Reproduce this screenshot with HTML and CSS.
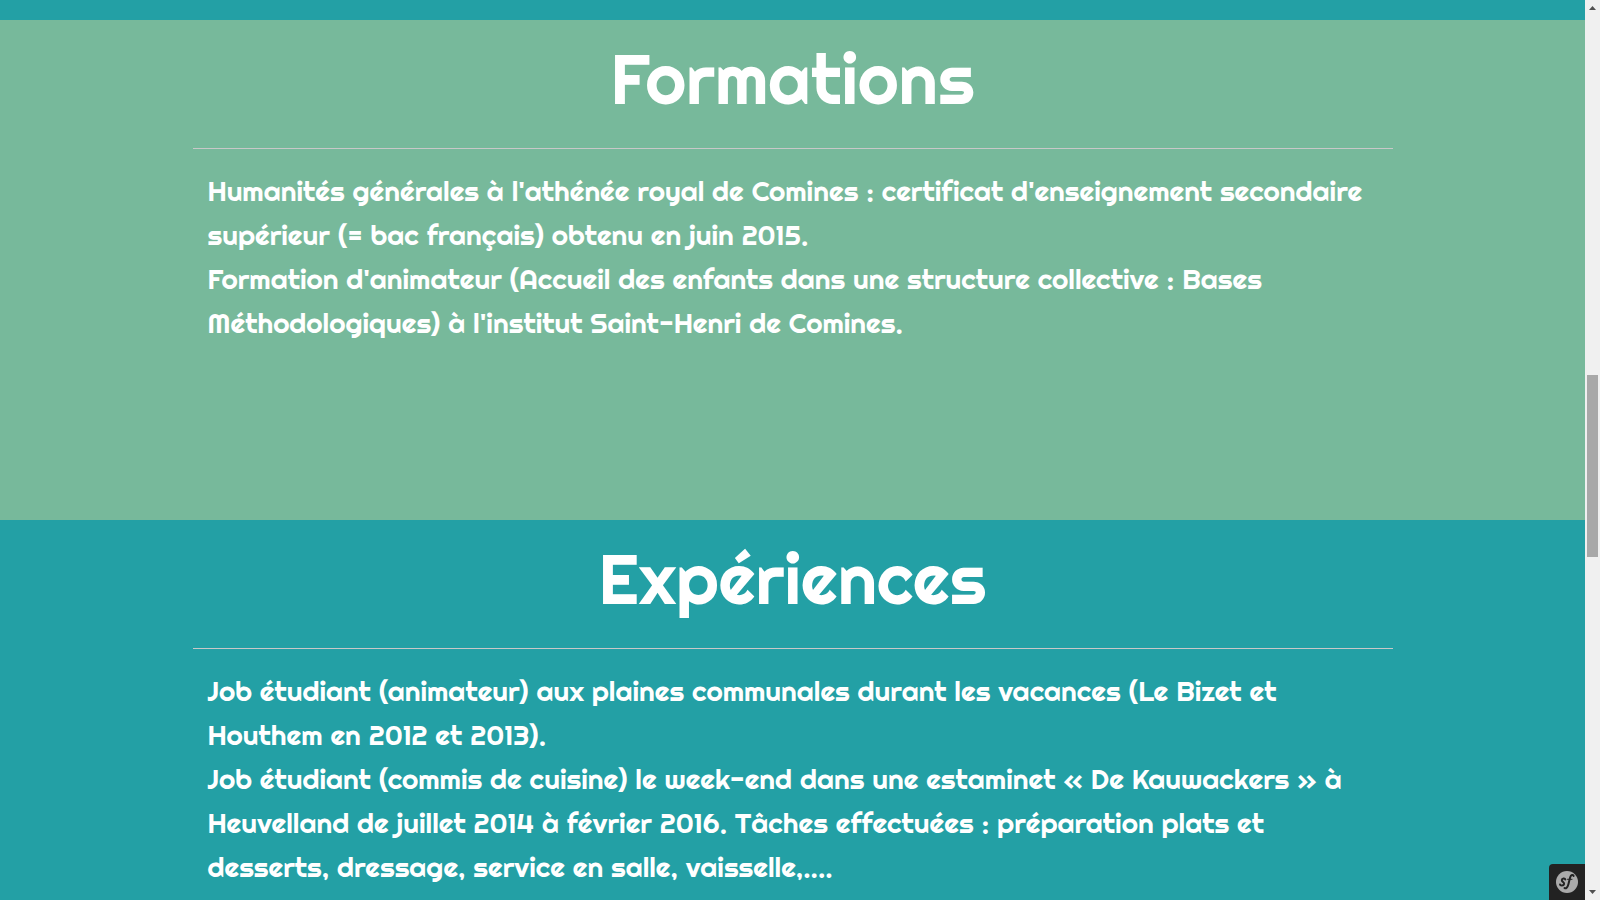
FILE: index.html
```html
<!DOCTYPE html>
<html lang="fr">
<head>
<meta charset="utf-8">
<title>Curriculum vitae</title>
<link rel="stylesheet" href="styles.css">
</head>
<body>
<main class="page">
  <div class="previous"></div>
  <section class="section section-green">
    <div class="container">
      <h1 class="title">Formations</h1>
      <hr class="rule">
      <p class="text">Humanités générales à l'athénée royal de Comines : certificat d'enseignement secondaire supérieur (= bac français) obtenu en juin 2015.<br>Formation d'animateur (Accueil des enfants dans une structure collective : Bases Méthodologiques) à l'institut Saint-Henri de Comines.</p>
    </div>
  </section>
  <section class="section section-teal">
    <div class="container">
      <h1 class="title">Expériences</h1>
      <hr class="rule">
      <p class="text">Job étudiant (animateur) aux plaines communales durant les vacances (Le Bizet et Houthem en 2012 et 2013).<br>Job étudiant (commis de cuisine) le week-end dans une estaminet « De Kauwackers » à Heuvelland de juillet 2014 à février 2016. Tâches effectuées : préparation plats et desserts, dressage, service en salle, vaisselle,....</p>
    </div>
  </section>
  <button class="toolbar" type="button" aria-label="Symfony">
    <svg width="22" height="22" viewBox="0 0 22 22">
      <circle cx="11" cy="11" r="11" fill="#aaa"/>
      <g fill="none" stroke="#222" stroke-linecap="round">
        <path stroke-width="2" d="M9.300 8.500C9 7 6 7.200 5.800 9C5.600 10.800 8.600 11.300 8.100 13C7.600 15 4.200 15 4 13.400"/>
        <path stroke-width="2" d="M17.600 5C17.200 3.300 14.900 3.600 14.100 6.600L12.400 13.200C11.500 16.600 9.900 18 8.500 17"/>
        <path stroke-width="1" d="M11.500 8.300H16"/>
      </g>
    </svg>
  </button>
</main>
<div class="scrollbar" aria-hidden="true">
  <svg class="arrow" width="15" height="17" viewBox="0 0 15 17"><path d="M4 10 7.500 6 11 10Z" fill="#505050"/></svg>
  <div class="track"><div class="thumb"></div></div>
  <svg class="arrow" width="15" height="17" viewBox="0 0 15 17"><path d="M4 7 7.500 11 11 7Z" fill="#505050"/></svg>
</div>
</body>
</html>
```
FILE: styles.css
```css
* { box-sizing: border-box; }
body {
  margin: 0;
  height: 100vh;
  display: flex;
  overflow: hidden;
  color: #fff;
  font-family: Righteous, Lato, sans-serif;
}
.page { flex: 1; min-width: 0; position: relative; overflow: hidden; }
.previous { height: 20px; background: #23a0a5; }
.section { min-height: 500px; }
.section-green { background: #77b99b; }
.section-teal { background: #23a0a5; }
.container { max-width: 1200px; margin: 0 auto; }
.title {
  margin: 0;
  padding: 5px 0 15px;
  font-size: 70px;
  line-height: 108px;
  font-weight: 400;
  text-align: center;
}
.rule { margin: 0; border: 0; border-top: 1px solid #c8c8c8; }
.text {
  margin: 0;
  padding: 20px 15px 0;
  font-size: 28px;
  line-height: 44px;
  font-weight: 400;
}
.toolbar {
  position: absolute;
  right: 0;
  bottom: 0;
  width: 36px;
  height: 36px;
  padding: 0;
  border: 0;
  border-radius: 4px 0 0 0;
  background: #222;
  display: grid;
  place-items: center;
}
.toolbar svg { display: block; }
.scrollbar { width: 15px; display: flex; flex-direction: column; background: #f0f0f0; }
.arrow { display: block; }
.track { flex: 1; padding: 0 2px; }
.thumb { height: 21%; margin-top: 358px; background: #a8a8a8; }
```
